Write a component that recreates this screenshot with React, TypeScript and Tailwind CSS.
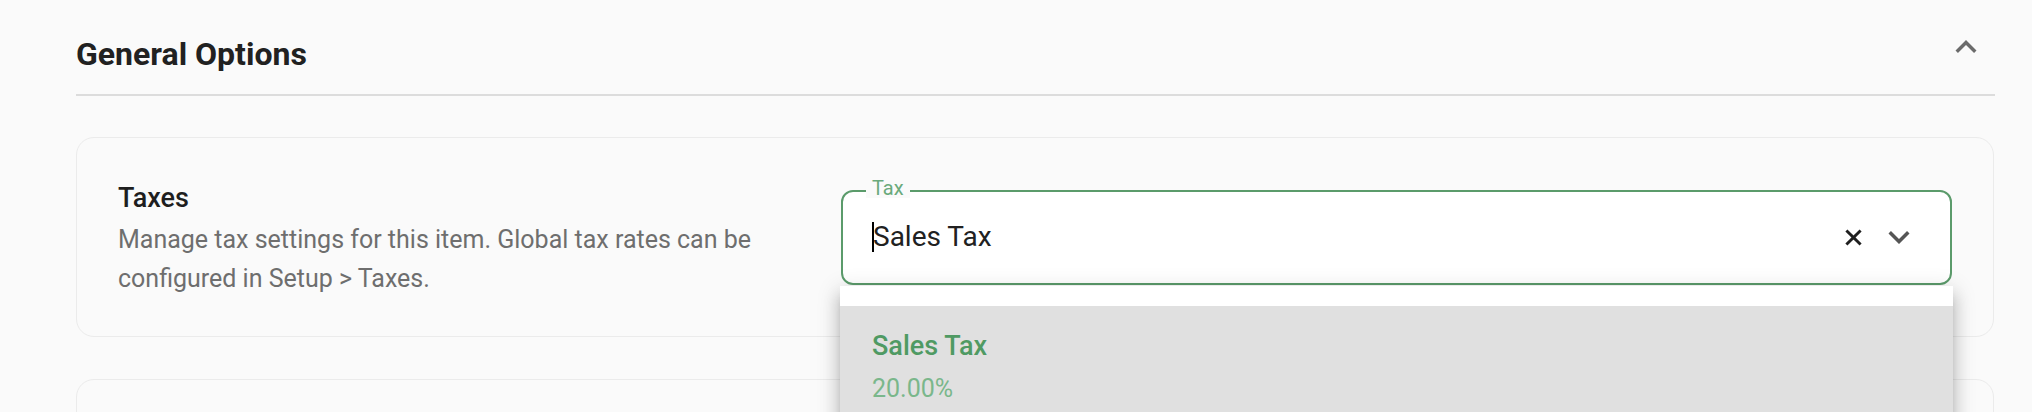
import { useState } from "react";

function ChevronIcon({ up, className }: { up?: boolean; className?: string }) {
  return (
    <svg viewBox="0 0 24 24" className={className} fill="currentColor">
      {up ? (
        <path d="M12 8l-6 6 1.41 1.41L12 10.83l4.59 4.58L18 14z" />
      ) : (
        <path d="M16.59 8.59 12 13.17 7.41 8.59 6 10l6 6 6-6z" />
      )}
    </svg>
  );
}

function CloseIcon({ className }: { className?: string }) {
  return (
    <svg viewBox="0 0 24 24" className={className} fill="none" stroke="currentColor" strokeWidth={2.6}>
      <path d="M5.7 5.7l12.6 12.6M18.3 5.7L5.7 18.3" />
    </svg>
  );
}

function TaxSelect() {
  const [value] = useState("Sales Tax");

  return (
    <div className="relative flex-1">
      <div className="relative flex h-[95px] items-center rounded-[12px] border-2 border-[#5b9b6b] bg-white pl-[30px] pr-[30px]">
        <span className="absolute -top-[14px] left-[23px] bg-[#fafafa] px-[6px] text-[20px] leading-[20px] text-[#6aaa7c]">
          Tax
        </span>
        <div className="relative flex-1 text-[28px] text-[#212121]">
          <span className="absolute -left-[1px] top-1/2 h-[30px] w-[2px] -translate-y-1/2 bg-black" />
          {value}
        </div>
        <div className="flex items-center gap-[11px]">
          <CloseIcon className="h-[27px] w-[27px] text-[#1f1f1f]" />
          <ChevronIcon className="h-[42px] w-[42px] text-[#555]" />
        </div>
      </div>

      {/* open listbox */}
      <div className="absolute -left-[1px] -right-[1px] top-[96px] z-10 bg-white pt-[20px] shadow-[0_8px_8px_-4px_rgba(0,0,0,0.2),0_12px_15px_2px_rgba(0,0,0,0.14),0_5px_21px_3px_rgba(0,0,0,0.12)]">
        <div className="bg-[#e0e0e0] px-[32px] pb-[24px] pt-[20px]">
          <div className="text-[27px] font-medium leading-[40px] text-[#4f9a63]">Sales Tax</div>
          <div className="mt-[5px] text-[25px] leading-[36px] text-[#7ab78b]">20.00%</div>
        </div>
      </div>
    </div>
  );
}

export default function App() {
  return (
    <div
      className="h-[412px] w-full overflow-hidden bg-[#fafafa] pl-[76px] pr-[37px]"
      style={{ fontFamily: "Roboto, 'Liberation Sans', sans-serif" }}
    >
      <div className="flex items-start justify-between pt-[26px]">
        <h2 className="mt-[12px] text-[32px] font-bold leading-[32px] text-[#212121]">General Options</h2>
        <button className="mr-[8px] text-[#6b6b6b]">
          <ChevronIcon up className="h-[42px] w-[42px]" />
        </button>
      </div>
      <div className="mt-[24px] h-[2px] bg-[#dcdcdc]" />

      <div className="mt-[41px] flex flex-col gap-[42px] pr-[1px]">
        <div className="flex h-[200px] items-center rounded-[18px] border border-[#ebebeb] bg-[#fafafa] px-[41px]">
          <div className="w-[723px] shrink-0 pr-[40px]">
            <div className="text-[27px] font-medium leading-[43px] text-[#1e1e1e]">Taxes</div>
            <p className="text-[25px] leading-[39px] text-[#6e6e6e]">
              Manage tax settings for this item. Global tax rates can be configured in Setup &gt; Taxes.
            </p>
          </div>
          <TaxSelect />
        </div>

        <div className="h-[200px] rounded-[18px] border border-[#ebebeb] bg-[#fafafa]" />
      </div>
    </div>
  );
}
